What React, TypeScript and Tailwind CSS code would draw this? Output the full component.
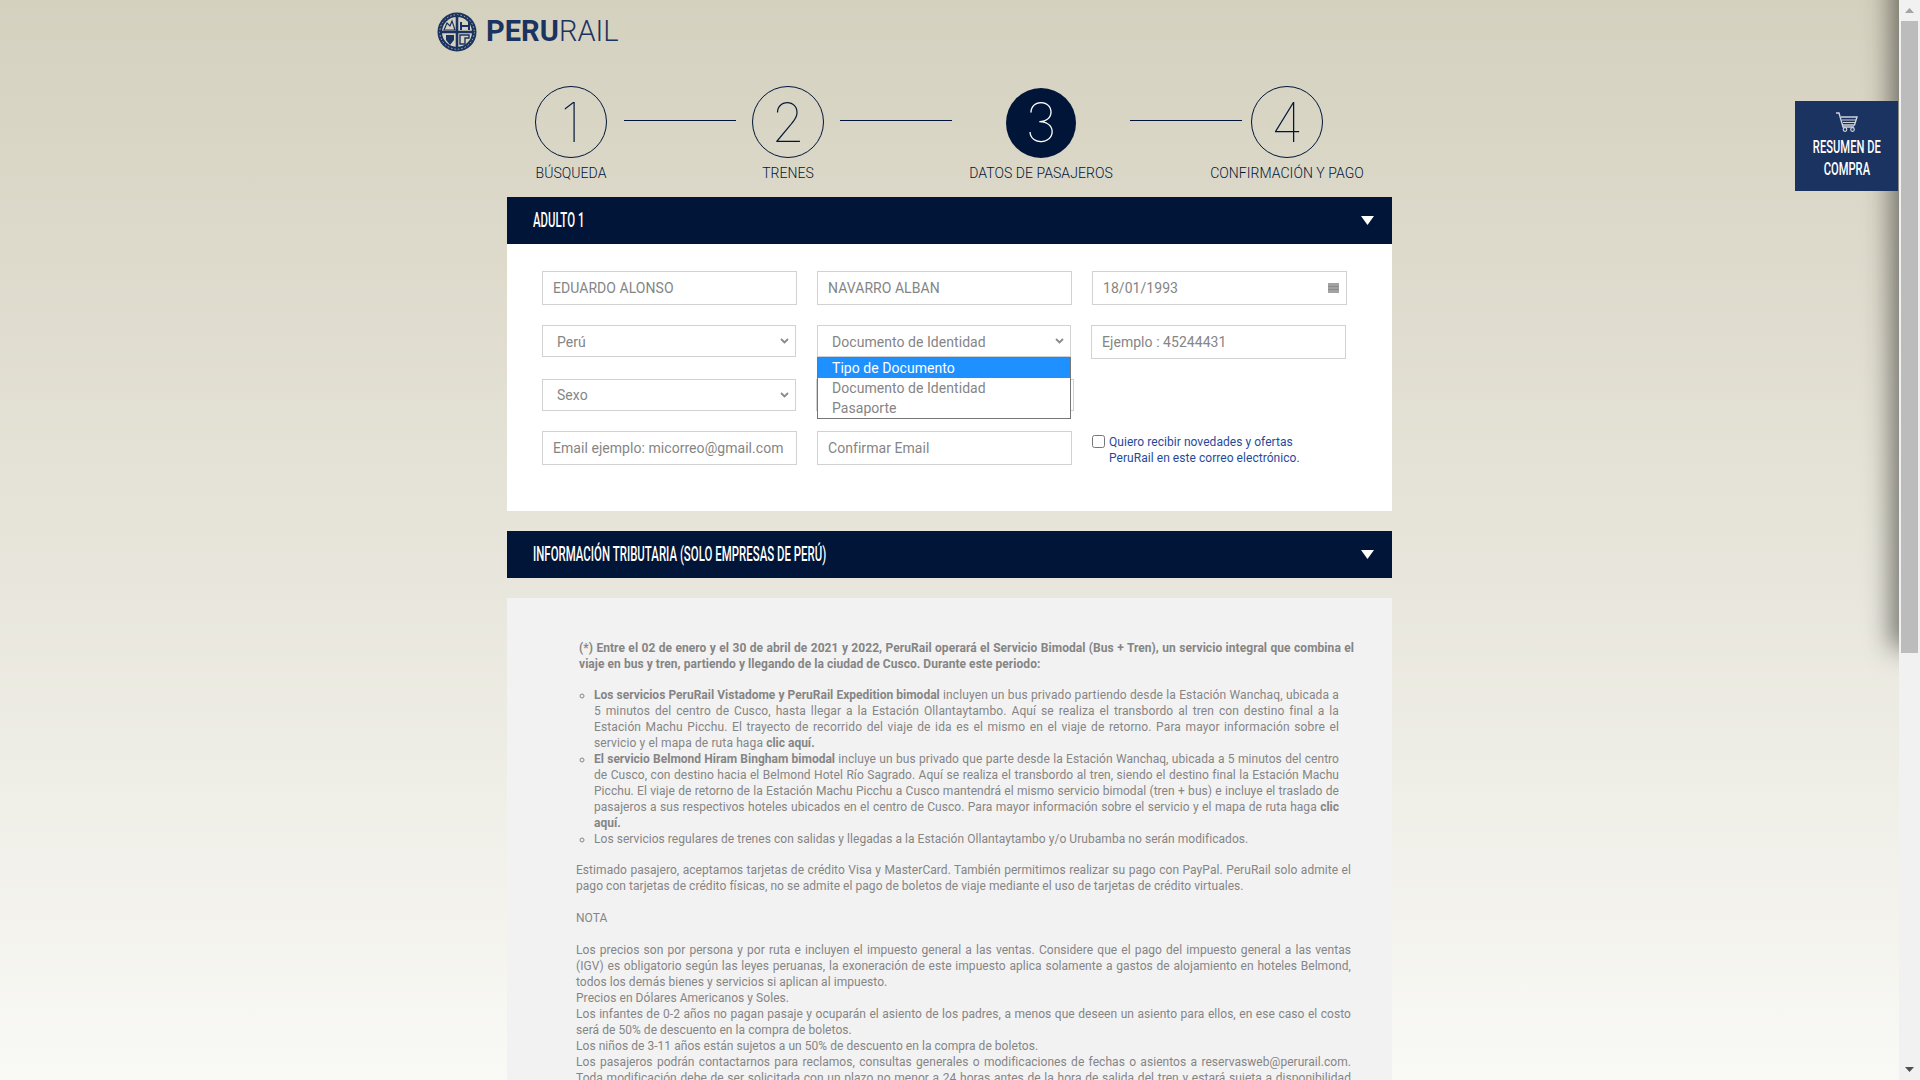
const steps = [
  { n: "1", label: "BÚSQUEDA" },
  { n: "2", label: "TRENES" },
  { n: "3", label: "DATOS DE PASAJEROS", active: true },
  { n: "4", label: "CONFIRMACIÓN Y PAGO" },
];

const Logo = () => (
  <div className="flex items-center h-[39px]">
    <svg width="40" height="40" viewBox="0 0 40 40" className="shrink-0">
      <circle cx="20" cy="20" r="19.5" fill="#1b3360" />
      <circle cx="20" cy="20" r="15" fill="#d6d2c1" />
      <circle cx="20" cy="20" r="17.2" fill="none" stroke="#d6d2c1" strokeWidth="0.8" strokeDasharray="1.5 2" />
      <path d="M3 20h34M20 3v34" stroke="#1b3360" strokeWidth="2.6" />
      <path d="M7 18l3-7 3 3 2-5 3 9z" fill="none" stroke="#1b3360" strokeWidth="1.2" />
      <path d="M23 10h2v3h6v-3h2v8h-2v-3h-6v3h-2z" fill="#1b3360" />
      <path d="M9 23h8v5l-4 5-4-5z" fill="#1b3360" />
      <path d="M23 23h9v3h-4v6h-5z" fill="none" stroke="#1b3360" strokeWidth="1.4" />
    </svg>
    <span className="ml-[9px] text-[29px] leading-none font-bold text-[#1b3360]">
      PERU<span className="font-light">RAIL</span>
    </span>
  </div>
);

const Step = ({ n, label, active }: { n: string; label: string; active?: boolean }) => (
  <div className="w-[72px] flex flex-col items-center">
    <div
      className={
        active
          ? "w-[70px] h-[70px] mt-[2px] rounded-full bg-[#001538] text-white flex items-center justify-center"
          : "w-[72px] h-[72px] rounded-full border border-[#001538] text-[#001538] flex items-center justify-center pt-[2px]"
      }
    >
      <span className="font-['Inter',sans-serif] text-[54px] font-thin leading-none">{n}</span>
    </div>
    <span className="mt-[6px] text-[14px] leading-[18px] font-light whitespace-nowrap text-[#001538]">{label}</span>
  </div>
);

const Line = ({ ml, mr }: { ml: string; mr: string }) => (
  <div className={`w-[112px] h-px mt-[34px] bg-[#001538] ${ml} ${mr}`} />
);

const Triangle = () => (
  <svg width="13" height="9" viewBox="0 0 13 9" className="shrink-0">
    <path d="M0 0h13L6.500 9z" fill="#fff" />
  </svg>
);

const SectionHeader = ({ title }: { title: string }) => (
  <div className="h-[47px] bg-[#001538] flex items-center justify-between pl-[26px] pr-[18px]">
    <span className="inline-block origin-left scale-x-[0.57] pb-[2px] text-[20px] font-medium text-white whitespace-nowrap">
      {title}
    </span>
    <Triangle />
  </div>
);

const inputCls =
  "w-[255px] h-[34px] border border-[#d2d2d2] bg-white px-[10px] text-[14px] text-[#858585] placeholder:text-[#858585] outline-none";

const Select = ({ value, low }: { value: string; low?: boolean }) => (
  <div className="relative w-[254px] h-[32px]">
    <select
      value={value}
      onChange={() => {}}
      className={
        low
          ? "w-full h-full appearance-none border border-[#d2d2d2] bg-white pl-[14px] pt-[2px] text-[14px] text-[#858585] outline-none"
          : "w-full h-full appearance-none border border-[#d2d2d2] bg-white pl-[14px] text-[14px] text-[#858585] outline-none"
      }
    >
      <option>{value}</option>
    </select>
    <svg width="9" height="6" viewBox="0 0 9 6" className="absolute right-[7px] top-[13px]">
      <path d="M1 1l3.500 3.500L8 1" fill="none" stroke="#8a8a8a" strokeWidth="1.8" />
    </svg>
  </div>
);

const paragraphCls = "text-justify";

const App = () => {
  return (
    <div className="flex h-screen w-full overflow-hidden font-['Roboto',sans-serif] tracking-[0.05px]">
      <main className="relative flex-1 overflow-hidden bg-linear-to-b from-[#d5d1bf] to-[#f9f9f6]">
        {/* closed side drawer, only its shadow shows */}
        <div className="absolute top-[-40px] right-[-30px] w-[30px] h-[680px] shadow-[0_0_26px_8px_rgba(40,40,35,0.6)]" />

        <div className="absolute top-[101px] right-[1px] z-10 w-[103px] h-[90px] bg-[#1b3360] flex flex-col items-center pt-[11px]">
          <svg width="23" height="20" viewBox="0 0 23 20" fill="none" stroke="#cfd3dc">
            <path d="M1 1h3l4 14h11" strokeWidth="1.4" />
            <path d="M6 5h16l-2.500 8H8" strokeWidth="1.4" />
            <path d="M7 8h14M8 10.500h12" strokeWidth="1.2" />
            <circle cx="10" cy="17.500" r="1.800" strokeWidth="1.2" />
            <circle cx="17.500" cy="17.500" r="1.800" strokeWidth="1.2" />
          </svg>
          <div className="mt-[4px] scale-x-[0.62] text-[18px] leading-[22px] font-medium text-white text-center whitespace-nowrap">
            RESUMEN DE
            <br />
            COMPRA
          </div>
        </div>

        <div className="w-[885px] ml-[507px]">
          <div className="ml-[-70px] pt-[12px]">
            <Logo />
          </div>

          <div className="flex mt-[35px] ml-[28px] h-[111px]">
            <Step {...steps[0]} />
            <Line ml="ml-[17px]" mr="mr-[16px]" />
            <Step {...steps[1]} />
            <Line ml="ml-[16px]" mr="mr-[53px]" />
            <Step {...steps[2]} />
            <Line ml="ml-[53px]" mr="mr-[9px]" />
            <Step {...steps[3]} />
          </div>

          <SectionHeader title="ADULTO 1" />

          <div className="bg-white pt-[27px] pb-[45px] pl-[35px]">
            <div className="flex gap-[20px]">
              <input readOnly value="EDUARDO ALONSO" className={inputCls} />
              <input readOnly value="NAVARRO ALBAN" className={inputCls} />
              <div className="relative">
                <input readOnly value="18/01/1993" className={inputCls} />
                <svg width="11" height="10" viewBox="0 0 11 10" className="absolute right-[8px] top-[12px]">
                  <rect width="11" height="10" fill="#a2a2a2" />
                  <path d="M0 3.500h11M0 6.500h11" stroke="#8b8b8b" />
                </svg>
              </div>
            </div>

            <div className="flex mt-[20px]">
              <Select value="Perú" low />
              <div className="relative ml-[21px]">
                <Select value="Documento de Identidad" low />
                {/* open native list of the select */}
                <ul className="absolute top-[32px] left-0 z-20 w-[254px] h-[62px] border border-[#767676] bg-white text-[14px] leading-[20px] text-[#858585]">
                  <li className="h-[20px] pl-[14px] bg-[#1e90ff] text-white">Tipo de Documento</li>
                  <li className="h-[20px] pl-[14px]">Documento de Identidad</li>
                  <li className="h-[20px] pl-[14px]">Pasaporte</li>
                </ul>
              </div>
              <input readOnly placeholder="Ejemplo : 45244431" className={`${inputCls} ml-[20px]`} />
            </div>

            <div className="flex mt-[20px]">
              <Select value="Sexo" />
              <div className="ml-[20px] w-[258px] h-[32px] border border-[#d2d2d2]" />
            </div>

            <div className="flex gap-[20px] mt-[20px]">
              <input readOnly placeholder="Email ejemplo: micorreo@gmail.com" className={inputCls} />
              <input readOnly placeholder="Confirmar Email" className={inputCls} />
              <label className="flex items-start pt-[3px]">
                <input type="checkbox" className="w-[13px] h-[13px] mt-[1px] shrink-0" />
                <span className="ml-[4px] text-[12px] leading-[16px] text-[#1f4a9c]">
                  Quiero recibir novedades y ofertas
                  <br />
                  PeruRail en este correo electrónico.
                </span>
              </label>
            </div>
          </div>

          <div className="mt-[20px]">
            <SectionHeader title="INFORMACIÓN TRIBUTARIA (SOLO EMPRESAS DE PERÚ)" />
          </div>

          <div className="mt-[20px] bg-[#f2f2f2] pt-[42px] pl-[69px] pr-[38px] text-[12px] leading-[16px] text-[#858585] h-[600px]">
            <p className={`${paragraphCls} w-[775px] ml-[3px] font-bold`}>
              (*) Entre el 02 de enero y el 30 de abril de 2021 y 2022, PeruRail operará el Servicio Bimodal (Bus + Tren), un servicio integral que combina el viaje en bus y tren, partiendo y llegando de la ciudad de Cusco. Durante este periodo:
            </p>
            <ul className="mt-[15px] ml-[18px] w-[745px] list-[circle] text-justify">
              <li className="tracking-[0.12px]">
                <b className="tracking-normal">Los servicios PeruRail Vistadome y PeruRail Expedition bimodal</b> incluyen un bus privado partiendo desde la Estación Wanchaq, ubicada a 5 minutos del centro de Cusco, hasta llegar a la Estación Ollantaytambo. Aquí se realiza el transbordo al tren con destino final a la Estación Machu Picchu. El trayecto de recorrido del viaje de ida es el mismo en el viaje de retorno. Para mayor información sobre el servicio y el mapa de ruta haga <b className="tracking-normal">clic aquí.</b>
              </li>
              <li>
                <b className="tracking-normal">El servicio Belmond Hiram Bingham bimodal</b> incluye un bus privado que parte desde la Estación Wanchaq, ubicada a 5 minutos del centro de Cusco, con destino hacia el Belmond Hotel Río Sagrado. Aquí se realiza el transbordo al tren, siendo el destino final la Estación Machu Picchu. El viaje de retorno de la Estación Machu Picchu a Cusco mantendrá el mismo servicio bimodal (tren + bus) e incluye el traslado de pasajeros a sus respectivos hoteles ubicados en el centro de Cusco. Para mayor información sobre el servicio y el mapa de ruta haga <b className="tracking-normal">clic aquí.</b>
              </li>
              <li>Los servicios regulares de trenes con salidas y llegadas a la Estación Ollantaytambo y/o Urubamba no serán modificados.</li>
            </ul>
            <p className={`${paragraphCls} mt-[15px] w-[775px]`}>
              Estimado pasajero, aceptamos tarjetas de crédito Visa y MasterCard. También permitimos realizar su pago con PayPal. PeruRail solo admite el pago con tarjetas de crédito físicas, no se admite el pago de boletos de viaje mediante el uso de tarjetas de crédito virtuales.
            </p>
            <p className="mt-[16px]">NOTA</p>
            <p className={`${paragraphCls} mt-[16px] w-[775px]`}>
              Los precios son por persona y por ruta e incluyen el impuesto general a las ventas. Considere que el pago del impuesto general a las ventas (IGV) es obligatorio según las leyes peruanas, la exoneración de este impuesto aplica solamente a gastos de alojamiento en hoteles Belmond, todos los demás bienes y servicios si aplican al impuesto.
              <br />
              Precios en Dólares Americanos y Soles.
              <br />
              Los infantes de 0-2 años no pagan pasaje y ocuparán el asiento de los padres, a menos que deseen un asiento para ellos, en ese caso el costo será de 50% de descuento en la compra de boletos.
              <br />
              Los niños de 3-11 años están sujetos a un 50% de descuento en la compra de boletos.
              <br />
              Los pasajeros podrán contactarnos para reclamos, consultas generales o modificaciones de fechas o asientos a reservasweb@perurail.com. Toda modificación debe de ser solicitada con un plazo no menor a 24 horas antes de la hora de salida del tren y estará sujeta a disponibilidad de espacios.
            </p>
          </div>
        </div>
      </main>

      {/* scrollbar */}
      <div className="w-[21px] h-full bg-[#f1f1f1] flex flex-col items-center shrink-0">
        <div className="h-[21px] flex items-center justify-center">
          <svg width="9" height="5" viewBox="0 0 9 5">
            <path d="M4.500 0L9 5H0z" fill="#a3a3a3" />
          </svg>
        </div>
        <div className="w-[17px] h-[632px] bg-[#bcbcbc]" />
        <div className="flex-1" />
        <div className="h-[21px] flex items-center justify-center">
          <svg width="9" height="5" viewBox="0 0 9 5">
            <path d="M0 0h9L4.500 5z" fill="#505050" />
          </svg>
        </div>
      </div>
    </div>
  );
};

export default App;
